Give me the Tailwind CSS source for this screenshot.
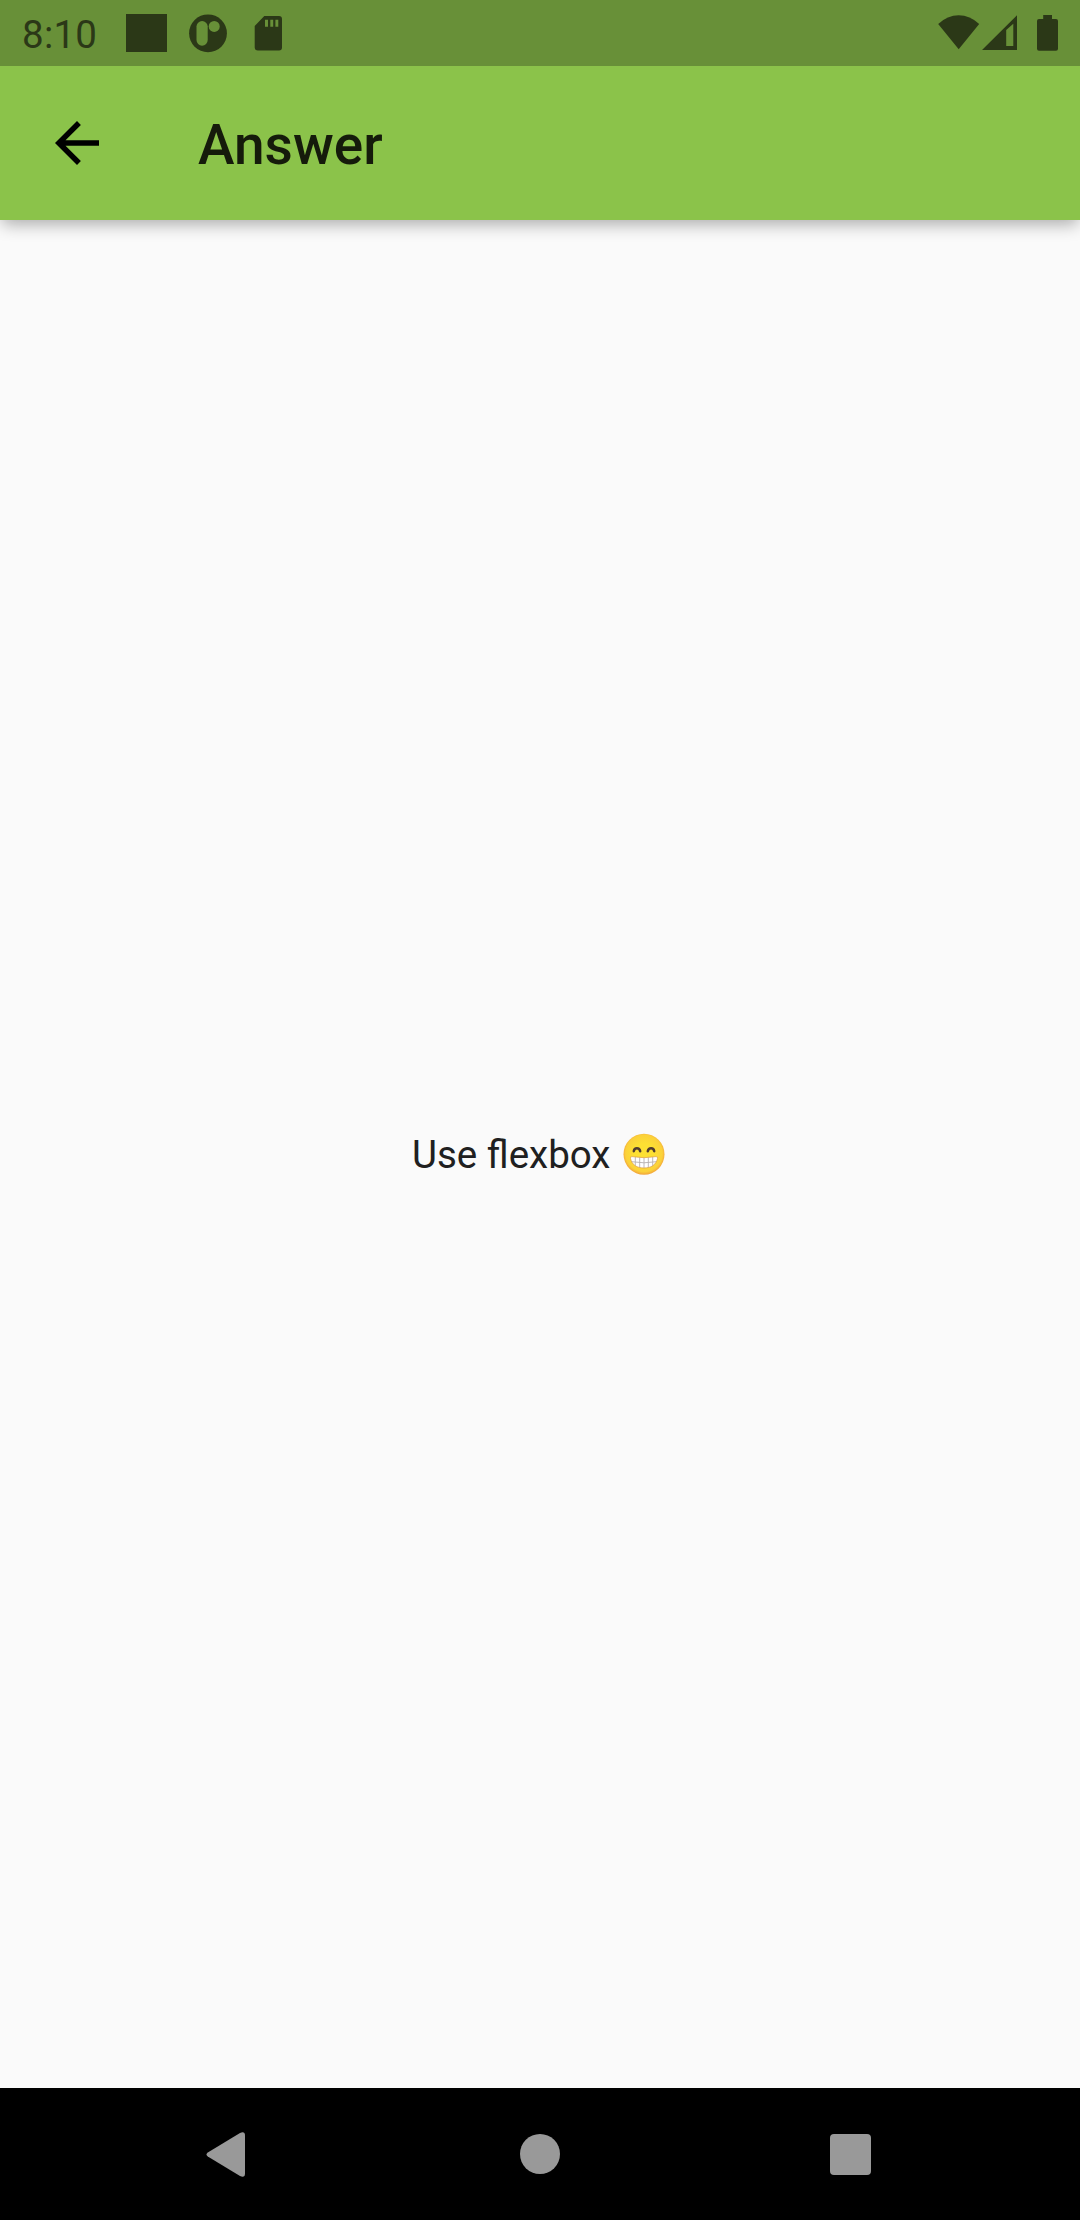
<!DOCTYPE html>
<html lang="en">
<head>
<meta charset="utf-8">
<title>Answer</title>
<script src="https://cdn.jsdelivr.net/npm/@tailwindcss/browser@4"></script>
</head>
<body class="flex h-[2220px] w-[1080px] flex-col overflow-hidden bg-[#fafafa] font-['Roboto',sans-serif]">
  <div class="relative z-10 flex h-[66px] shrink-0 items-start bg-[#689038] text-[#2b3817]">
    <span class="mt-[12px] ml-[22px] w-[104px] text-[38.5px] leading-[45px] tracking-[0.25px] whitespace-nowrap">8:10</span>
    <div class="mt-[14px] h-[38px] w-[41px] bg-[#2b3817]"></div>
    <svg class="mt-[14px] ml-[21px] h-[39px] w-[39px]" viewBox="0 0 39 39" fill="currentColor">
      <circle cx="20" cy="19.3" r="18.9"/>
      <rect x="8.5" y="7" width="11.2" height="24.7" rx="5.6" fill="#689038"/>
      <circle cx="26.2" cy="12.4" r="5.5" fill="#689038"/>
    </svg>
    <svg class="mt-[16px] ml-[27px] h-[35px] w-[28px]" viewBox="0 0 28 35" fill="currentColor" fill-rule="evenodd">
      <path d="M10.3 0H25Q28 0 28 3V31.5Q28 34.5 25 34.5H4Q.7 34.5.7 31.5V10ZM11 3.7V10.7H14V3.7ZM16.3 3.7V10.7H19.2V3.7ZM21.4 3.7V10.7H24.3V3.7Z"/>
    </svg>
    <svg class="mt-[15px] ml-auto h-[35px] w-[42px]" viewBox="0 0 42 35" fill="currentColor">
      <path d="M.2 9Q9.5.3 20.7.3T41.2 9L20.7 34.3Z"/>
    </svg>
    <svg class="mt-[15px] ml-[2px] h-[35px] w-[35px]" viewBox="0 0 35 35" fill="currentColor" fill-rule="evenodd">
      <path d="M0 35L35 .2V35ZM24.2 15V31H31.3V8.7Z"/>
    </svg>
    <svg class="mt-[15px] mr-[22px] ml-[20px] h-[36px] w-[21px]" viewBox="0 0 21 36" fill="currentColor">
      <path d="M6.2 0H15V4H19Q21 4 21 6V33.7Q21 35.7 19 35.7H2Q0 35.7 0 33.7V6Q0 4 2 4H6.2Z"/>
    </svg>
  </div>
  <header class="flex h-[154px] shrink-0 items-center bg-[#8bc34a] shadow-[0_6px_16px_-2px_rgba(0,0,0,0.33)]">
    <svg class="ml-[44px] size-[66px]" viewBox="0 0 24 24" fill="#000"><path d="M20 11H7.83l5.59-5.59L12 4l-8 8 8 8 1.41-1.41L7.83 13H20v-2z"/></svg>
    <h1 class="mt-[4px] ml-[88px] text-[55px] leading-[64px] font-medium text-[#151b0b]">Answer</h1>
  </header>
  <main class="flex grow items-center justify-center">
    <p class="flex items-center text-[38.5px] leading-[45px] whitespace-pre text-[#202020]"><span>Use flexbox </span>
      <svg class="h-[42px] w-[48px]" viewBox="0 0 48 42" role="img" aria-label="Beaming face with smiling eyes">
        <defs>
          <radialGradient id="face" cx=".5" cy=".48" r=".52"><stop offset=".45" stop-color="#fde033"/><stop offset=".86" stop-color="#fbd13a"/><stop offset="1" stop-color="#f2a43a"/></radialGradient>
          <clipPath id="mouth"><path d="M11.8 23.6Q24 25.8 36.2 23.6Q37.8 23.5 37.5 25.5C36 32 31 35 24 35S12 32 10.5 25.5Q10.2 23.5 11.8 23.6Z"/></clipPath>
        </defs>
        <circle cx="24" cy="21.2" r="20.5" fill="url(#face)"/>
        <g fill="none" stroke="#503b30" stroke-width="2.5" stroke-linecap="round">
          <path d="M13.8 18.2C14.3 14.3 19.5 14.3 20.2 18.2"/>
          <path d="M27.8 18.2C28.5 14.3 33.7 14.3 34.2 18.2"/>
        </g>
        <g clip-path="url(#mouth)">
          <rect x="10" y="23" width="28" height="13" fill="#fff"/>
          <path d="M10.5 28.6Q24 31 37.5 28.6M15.3 23V33M19.7 23V36M24 23V36M28.3 23V36M32.7 23V33" fill="none" stroke="#b5b0b0" stroke-width=".9"/>
        </g>
        <path d="M11.8 23.6Q24 25.8 36.2 23.6Q37.8 23.5 37.5 25.5C36 32 31 35 24 35S12 32 10.5 25.5Q10.2 23.5 11.8 23.6Z" fill="none" stroke="#dc9c42" stroke-width=".7"/>
      </svg></p>
  </main>
  <nav class="flex h-[132px] shrink-0 items-center bg-black text-[#999]">
    <svg class="ml-[206px] h-[46px] w-[39px]" viewBox="0 0 39 46" fill="currentColor"><path d="M1.8 21.4L34 1.9Q39-.2 39 4.5V42.5Q39 47.200 34 45.1L1.8 25.600Q-.8 23.5 1.8 21.4Z"/></svg>
    <div class="ml-[275px] size-[40px] rounded-full bg-[#999]"></div>
    <div class="mt-[1px] ml-[270px] size-[41px] rounded-[4px] bg-[#999]"></div>
  </nav>
</body>
</html>
